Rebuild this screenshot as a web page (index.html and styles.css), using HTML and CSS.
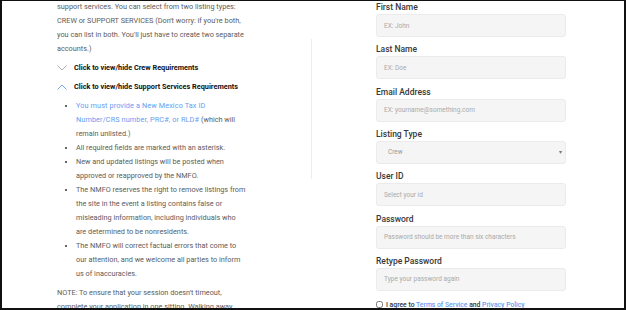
FILE: index.html
```html
<!DOCTYPE html>
<html lang="en">
<head>
  <meta charset="UTF-8">
  <meta name="viewport" content="width=device-width, initial-scale=1.0">
  <title>Film Office Directory - Sign Up</title>
  <link rel="stylesheet" href="styles.css">
</head>
<body>
  <div class="frame">
    <div class="page">
      <div class="info">
        <p class="intro">support services. You can select from two listing types: CREW or SUPPORT SERVICES (Don't worry: if you're both, you can list in both. You'll just have to create two separate accounts.)</p>

        <div class="toggle">
          <svg class="chevron" width="10" height="6" viewBox="0 0 10 6"><path d="M0.5 0.5 L5 5 L9.5 0.5" fill="none" stroke="#9a9a9a" stroke-width="0.8"/></svg>
          <span>Click to view/hide Crew Requirements</span>
        </div>
        <div class="toggle">
          <svg class="chevron" width="10" height="6" viewBox="0 0 10 6"><path d="M0.5 5.5 L5 1 L9.5 5.5" fill="none" stroke="#4a8fe7" stroke-width="0.8"/></svg>
          <span>Click to view/hide Support Services Requirements</span>
        </div>

        <ul class="reqs">
          <li><a href="#" class="tax-link">You must provide a New Mexico Tax ID Number/CRS number, PRC#, or RLD#</a> (which will remain unlisted.)</li>
          <li>All required fields are marked with an asterisk.</li>
          <li>New and updated listings will be posted when approved or reapproved by the NMFO.</li>
          <li>The NMFO reserves the right to remove listings from the site in the event a listing contains false or misleading information, including individuals who are determined to be nonresidents.</li>
          <li>The NMFO will correct factual errors that come to our attention, and we welcome all parties to inform us of inaccuracies.</li>
        </ul>

        <p class="note">NOTE: To ensure that your session doesn't timeout, complete your application in one sitting. Walking away from your computer for a long time may log you out.</p>
      </div>

      <div class="divider"></div>

      <form class="signup">
        <div class="field">
          <label>First Name</label>
          <input type="text" placeholder="EX: John">
        </div>
        <div class="field">
          <label>Last Name</label>
          <input type="text" placeholder="EX: Doe">
        </div>
        <div class="field">
          <label>Email Address</label>
          <input type="text" placeholder="EX: yourname@something.com">
        </div>
        <div class="field">
          <label>Listing Type</label>
          <div class="select-wrap">
            <select>
              <option>Crew</option>
              <option>Support Services</option>
            </select>
            <span class="arrow">&#9662;</span>
          </div>
        </div>
        <div class="field">
          <label>User ID</label>
          <input type="text" placeholder="Select your id">
        </div>
        <div class="field">
          <label>Password</label>
          <input type="password" placeholder="Password should be more than six characters">
        </div>
        <div class="field">
          <label>Retype Password</label>
          <input type="password" placeholder="Type your password again">
        </div>
        <div class="agree">
          <input type="checkbox">
          <span>I agree to <a href="#">Terms of Service</a> and <a href="#">Privacy Policy</a></span>
        </div>
      </form>
    </div>
  </div>
</body>
</html>
```

FILE: styles.css
```css
* {
  box-sizing: border-box;
}

body {
  margin: 0;
  font-family: Roboto, 'Liberation Sans', Arial, sans-serif;
  background-color: white;
}

.frame {
  width: 626px;
  height: 310px;
  border-top: 1px solid #111;
  border-left: 2px solid #111;
  border-right: 2px solid #111;
  border-bottom: 2px solid #111;
  overflow: hidden;
}

.page {
  display: flex;
  align-items: flex-start;
  padding-left: 55px;
}

.info {
  width: 254px;
  padding-right: 63px;
  font-size: 7.3px;
  line-height: 14px;
  color: #5c5c5c;
}

.intro {
  margin: -1px 0 0;
}

.toggle {
  display: flex;
  align-items: center;
  gap: 7px;
  margin-top: 5px;
  color: #111;
  font-weight: bold;
}

.reqs {
  margin: 5px 0 0;
  padding-left: 19px;
  padding-right: 1.5px;
}

.reqs li::marker {
  color: #333;
}

a {
  color: #6a9cf0;
  text-decoration: none;
}

.tax-link {
  letter-spacing: 0.1px;
}

.note {
  margin: 5px 0 0;
}

.divider {
  width: 1px;
  height: 140px;
  margin-top: 38px;
  background-color: #ededed;
}

.signup {
  width: 190px;
  margin-left: 64px;
}

.field {
  margin-bottom: 6.33px;
}

.field label {
  display: block;
  height: 12px;
  margin-bottom: 1px;
  font-size: 8.5px;
  line-height: 12px;
  font-weight: 500;
  color: #383838;
}

.field input,
.field select {
  display: block;
  width: 100%;
  height: 23px;
  padding: 0 7px;
  border: 1px solid #ebebeb;
  border-radius: 3px;
  background-color: #f5f5f5;
  font-family: inherit;
  font-size: 6.5px;
  color: #999;
  outline: none;
}

.field input::placeholder {
  color: #aaa;
}

.select-wrap {
  position: relative;
}

.field select {
  appearance: none;
  padding-left: 11px;
}

.arrow {
  position: absolute;
  right: 4px;
  top: 7px;
  font-size: 6px;
  color: #777;
}

.agree {
  display: flex;
  align-items: center;
  gap: 3px;
  margin-top: 10px;
  font-size: 6.8px;
  font-weight: 500;
  color: #333;
}

.agree input {
  width: 7px;
  height: 7px;
  margin: 0;
}
```
